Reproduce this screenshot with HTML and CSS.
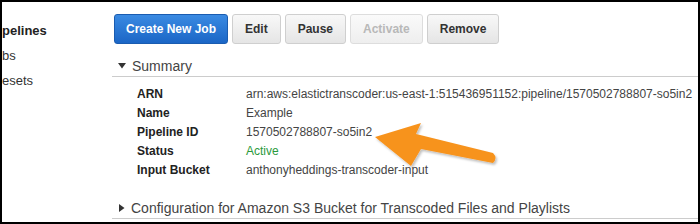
FILE: index.html
```html
<html>
<head>
    <meta charset="UTF-8">
    <title>Pipeline</title>
    <link rel="stylesheet" href="styles.css">
</head>
<body>
    <div class="frame">
        <div class="sidebar">
            <div class="nav-item active">pelines</div>
            <div class="nav-item">bs</div>
            <div class="nav-item">esets</div>
        </div>
        <div class="content">
            <div class="toolbar">
                <button class="btn primary" type="button">Create New Job</button>
                <button class="btn" type="button">Edit</button>
                <button class="btn" type="button">Pause</button>
                <button class="btn" type="button" disabled>Activate</button>
                <button class="btn" type="button">Remove</button>
            </div>

            <div class="section-head">
                <svg class="caret" width="8" height="6" viewBox="0 0 8 6"><path d="M0 0 L8 0 L4 5.5 Z" fill="#333"/></svg>
                <span>Summary</span>
            </div>
            <div class="details">
                <div class="row"><span class="label">ARN</span><span class="value">arn:aws:elastictranscoder:us-east-1:515436951152:pipeline/1570502788807-so5in2</span></div>
                <div class="row"><span class="label">Name</span><span class="value">Example</span></div>
                <div class="row"><span class="label">Pipeline ID</span><span class="value">1570502788807-so5in2</span></div>
                <div class="row"><span class="label">Status</span><span class="value status">Active</span></div>
                <div class="row"><span class="label">Input Bucket</span><span class="value">anthonyheddings-transcoder-input</span></div>
            </div>

            <div class="section-head collapsed">
                <svg class="caret" width="6" height="8" viewBox="0 0 6 8"><path d="M0 0 L5.5 4 L0 8 Z" fill="#333"/></svg>
                <span>Configuration for Amazon S3 Bucket for Transcoded Files and Playlists</span>
            </div>
        </div>

        <!-- callout arrow drawn over the page -->
        <svg class="callout" width="700" height="224" viewBox="0 0 700 224">
            <defs>
                <filter id="shadow" x="-10%" y="-10%" width="130%" height="140%">
                    <feDropShadow dx="1.5" dy="2" stdDeviation="1" flood-color="#000" flood-opacity="0.25"/>
                </filter>
            </defs>
            <path d="M375 137 L421 123 L416 134 L493 153 Q498 158 493 163 L421 149 L411 166 Z" fill="#f7931e" filter="url(#shadow)"/>
        </svg>
    </div>
</body>
</html>
```

FILE: styles.css
```css
body {
    margin: 0;
    padding: 0;
    background: #fff;
    font-family: 'Liberation Sans', Arial, sans-serif;
    color: #333;
}

.frame {
    position: relative;
    width: 700px;
    height: 224px;
    box-sizing: border-box;
    border: 2px solid #000;
    display: flex;
    overflow: hidden;
}

.sidebar {
    width: 110px;
    flex-shrink: 0;
    padding-top: 16px;
}

.nav-item {
    font-size: 13px;
    line-height: 25px;
    color: #333;
    white-space: nowrap;
}

.nav-item.active {
    font-weight: bold;
    color: #222;
}

.content {
    flex: 1;
    padding-top: 12px;
}

.toolbar {
    display: flex;
    gap: 4px;
    padding-left: 2px;
}

.btn {
    height: 30px;
    padding: 0 12px;
    font-family: 'Liberation Sans', Arial, sans-serif;
    font-size: 12px;
    font-weight: bold;
    color: #333;
    white-space: nowrap;
    background: linear-gradient(#f8f8f8, #e5e5e5);
    border: 1px solid #cfcfcf;
    border-radius: 3px;
}

.btn:disabled {
    color: #b8b8b8;
    background: linear-gradient(#fafafa, #eeeeee);
    border-color: #dddddd;
}

.btn.primary {
    width: 114px;
    padding: 0;
    color: #fff;
    background: linear-gradient(#3a8ae2, #1b66c6);
    border-color: #1a5cb0;
}

.section-head {
    display: flex;
    align-items: center;
    margin-top: 12px;
    height: 20px;
    padding-left: 6px;
    font-size: 14px;
    color: #444;
    border-bottom: 1px solid #cccccc;
}

.section-head .caret {
    margin-right: 6px;
}

.section-head.collapsed {
    margin-top: 18px;
    padding-left: 7px;
}

.details {
    padding: 8px 0 0 25px;
}

.row {
    display: flex;
    height: 19px;
    line-height: 19px;
    font-size: 12px;
    white-space: nowrap;
}

.label {
    width: 109px;
    flex-shrink: 0;
    font-weight: bold;
    color: #222;
}

.value {
    color: #444;
}

.value.status {
    color: #2b9a3c;
}

.callout {
    position: absolute;
    left: -2px;
    top: -2px;
    pointer-events: none;
}
```
